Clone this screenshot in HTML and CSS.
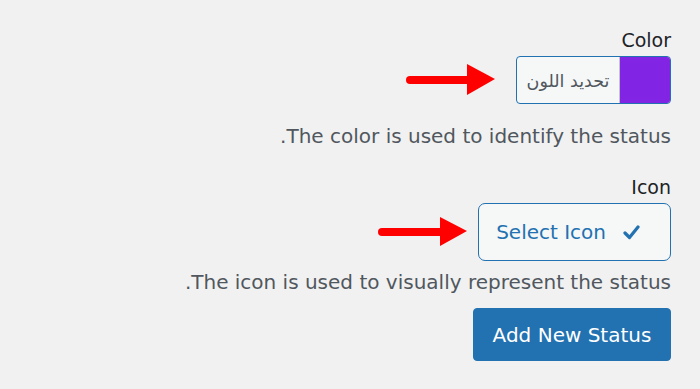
FILE: index.html
```html
<!DOCTYPE html>
<html lang="en">
<head>
<meta charset="utf-8">
<link rel="stylesheet" href="styles.css">
</head>
<body>
<div class="panel">
  <div class="field">
    <div class="label">Color</div>
    <div class="row row-color">
      <button class="color-btn">
        <span class="swatch"></span>
        <span class="color-text" lang="ar" dir="rtl">تحديد اللون</span>
      </button>
      <svg class="arrow arrow-1" width="89" height="32" viewBox="0 0 89 32">
        <line x1="4" y1="16" x2="64" y2="16" stroke="#ff0000" stroke-width="8" stroke-linecap="round"/>
        <polygon points="61,0 89,15 61,31" fill="#ff0000"/>
      </svg>
    </div>
    <div class="desc">The color is used to identify the status.</div>
  </div>
  <div class="field field-icon">
    <div class="label">Icon</div>
    <div class="row row-icon">
      <button class="icon-btn">
        <svg class="check" width="17" height="15" viewBox="0 0 17 15">
          <path d="M2 8 L6.5 12.5 L15 2" fill="none" stroke="#2271b1" stroke-width="3.2" stroke-linecap="round" stroke-linejoin="round"/>
        </svg>
        <span>Select Icon</span>
      </button>
      <svg class="arrow arrow-2" width="89" height="30" viewBox="0 0 89 30">
        <line x1="4" y1="15" x2="66" y2="15" stroke="#ff0000" stroke-width="8" stroke-linecap="round"/>
        <polygon points="62,0 89,14 62,29" fill="#ff0000"/>
      </svg>
    </div>
    <div class="desc">The icon is used to visually represent the status.</div>
  </div>
  <div class="actions">
    <button class="primary">Add New Status</button>
  </div>
</div>
</body>
</html>
```
FILE: styles.css
```css
html, body {
  margin: 0;
  padding: 0;
  background: #f1f1f1;
}
body {
  width: 700px;
  height: 389px;
  overflow: hidden;
  font-family: "DejaVu Sans", Verdana, sans-serif;
}
.panel {
  direction: rtl;
  padding: 28px 29px 0 0;
  display: flex;
  flex-direction: column;
}
.field {
  display: flex;
  flex-direction: column;
  align-items: flex-start;
}
.label {
  font-size: 19px;
  line-height: 24px;
  color: #1d2327;
}
.row {
  display: flex;
  align-items: center;
  margin-top: 4px;
}
.row-color { gap: 21px; }
.row-icon { gap: 11px; }
.arrow { display: block; }
.color-btn {
  display: flex;
  align-items: stretch;
  width: 155px;
  height: 48px;
  padding: 0;
  border: 1px solid #2271b1;
  border-radius: 4px;
  background: #f6f7f7;
  overflow: hidden;
  font-family: inherit;
}
.swatch {
  width: 50px;
  background: #8224e3;
  border-left: 1px solid #c3c4c7;
}
.color-text {
  flex: 1;
  display: flex;
  align-items: center;
  justify-content: center;
  font-size: 17.5px;
  color: #50575e;
  padding-top: 2px;
}
.desc {
  font-size: 20px;
  line-height: 24px;
  color: #50575e;
  margin-top: 20px;
}
.field-icon { margin-top: 27px; }
.field-icon .desc { margin-top: 9px; }
.icon-btn {
  display: flex;
  align-items: center;
  gap: 17px;
  width: 193px;
  height: 58px;
  padding: 0 30px 0 10px;
  border: 1px solid #2271b1;
  border-radius: 7px;
  background: #f6f7f7;
  color: #2271b1;
  font-family: inherit;
  font-size: 20px;
  direction: rtl;
}
.check { display: block; }
.actions {
  display: flex;
  margin-top: 14px;
}
.primary {
  width: 198px;
  height: 53px;
  border: 1px solid #2271b1;
  border-radius: 4px;
  background: #2271b1;
  color: #ffffff;
  font-family: inherit;
  font-size: 20px;
  padding: 0;
}
```
